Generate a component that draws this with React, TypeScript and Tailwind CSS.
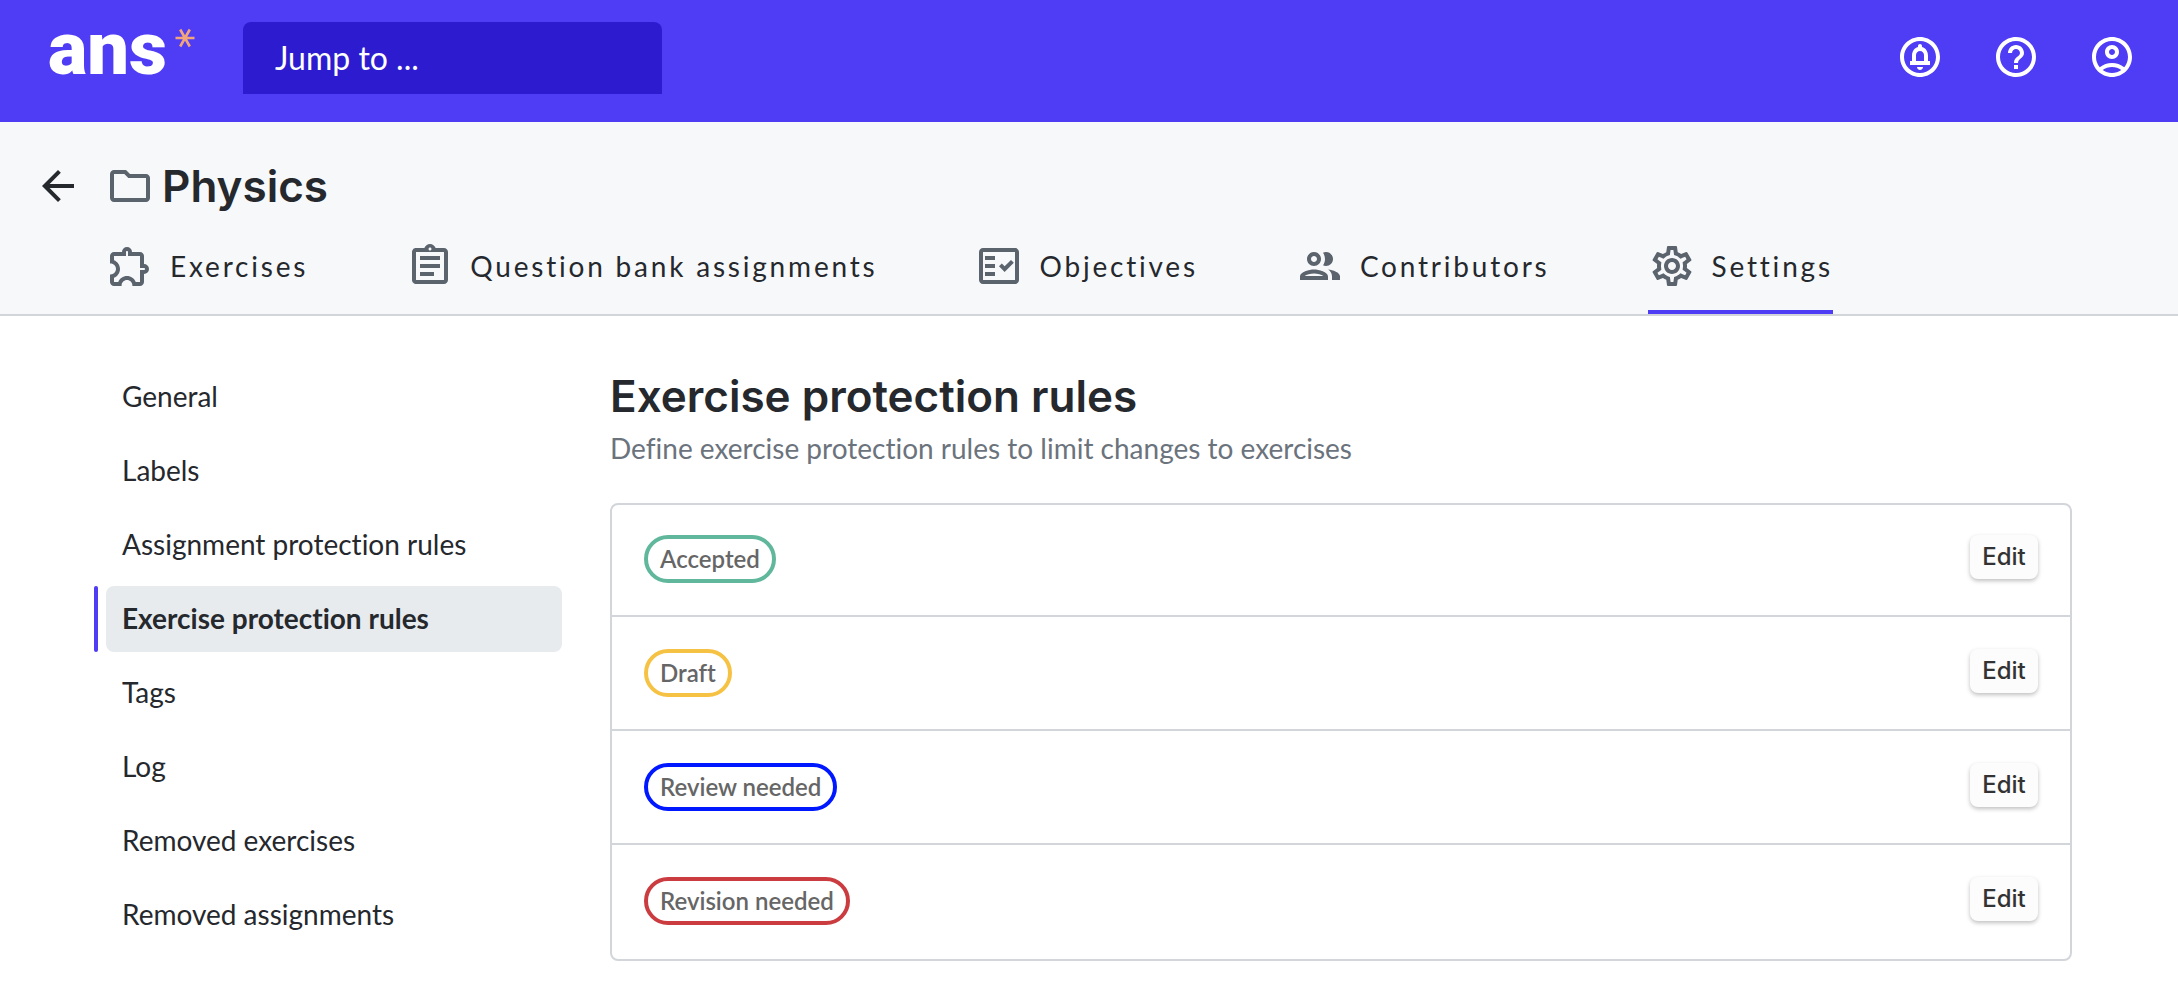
import type { ComponentType } from "react";
import {
  MdArrowBack,
  MdHelpOutline,
  MdOutlineAccountCircle,
  MdOutlineAssignment,
  MdOutlineCircleNotifications,
  MdOutlineExtension,
  MdOutlineFactCheck,
  MdOutlineSettings,
} from "react-icons/md";

type Icon = ComponentType<{ className?: string }>;

function FolderIcon({ className }: { className?: string }) {
  return (
    <svg viewBox="0 0 24 24" fill="currentColor" className={className} aria-hidden="true">
      <path d="M20 6h-8l-2-2H4c-1.1 0-2 .9-2 2v12c0 1.1.9 2 2 2h16c1.1 0 2-.9 2-2V8c0-1.1-.9-2-2-2zm0 12H4V6h5.17l2 2H20v10z" />
    </svg>
  );
}

function PeopleIcon({ className }: { className?: string }) {
  return (
    <svg viewBox="0 0 24 24" fill="currentColor" className={className} aria-hidden="true">
      <path d="M9 13.75c-2.34 0-7 1.17-7 3.5V19h14v-1.75c0-2.33-4.66-3.5-7-3.5zM4.34 17c.84-.58 2.87-1.25 4.66-1.25s3.82.67 4.66 1.25H4.34zM9 12c1.93 0 3.5-1.57 3.5-3.5S10.93 5 9 5 5.5 6.57 5.5 8.5 7.07 12 9 12zm0-5c.83 0 1.5.67 1.5 1.5S9.83 10 9 10s-1.5-.67-1.5-1.5S8.17 7 9 7zm7.04 6.81c1.16.84 1.96 1.96 1.96 3.44V19h4v-1.75c0-2.02-3.5-3.17-5.96-3.44zM15 12c1.93 0 3.5-1.57 3.5-3.5S16.93 5 15 5c-.54 0-1.04.13-1.5.35.63.89 1 1.98 1 3.15s-.37 2.26-1 3.15c.46.22.96.35 1.5.35z" />
    </svg>
  );
}

const tabs: { label: string; icon: Icon; active?: boolean }[] = [
  { label: "Exercises", icon: MdOutlineExtension },
  { label: "Question bank assignments", icon: MdOutlineAssignment },
  { label: "Objectives", icon: MdOutlineFactCheck },
  { label: "Contributors", icon: PeopleIcon },
  { label: "Settings", icon: MdOutlineSettings, active: true },
];

const sections = [
  "General",
  "Labels",
  "Assignment protection rules",
  "Exercise protection rules",
  "Tags",
  "Log",
  "Removed exercises",
  "Removed assignments",
];
const activeSection = "Exercise protection rules";

const rules = [
  { label: "Accepted", border: "border-[#61b79b]" },
  { label: "Draft", border: "border-[#f6c244]" },
  { label: "Review needed", border: "border-[#0018ff]" },
  { label: "Revision needed", border: "border-[#cb3c40]" },
];

const actions: { label: string; icon: Icon }[] = [
  { label: "Notifications", icon: MdOutlineCircleNotifications },
  { label: "Help", icon: MdHelpOutline },
  { label: "Account", icon: MdOutlineAccountCircle },
];

function Logo() {
  return (
    <a href="#home" aria-label="ans home" className="flex items-start gap-2 text-white">
      <span className="font-[Roboto,sans-serif] text-[74px] leading-[54px] font-black">ans</span>
      <svg viewBox="0 0 20 20" className="mt-1.5 size-5" fill="none" stroke="#f2a57b" strokeWidth="2.6" aria-hidden="true">
        <path d="M0.5 10H19.5M5.2 1.5L14.8 18.5M14.8 1.5L5.2 18.5" />
      </svg>
    </a>
  );
}

function TopBar() {
  return (
    <header className="flex items-start justify-between bg-[#4f3cf5] pt-[22px] pr-[42px] pb-7 pl-12">
      <div className="flex items-start gap-12">
        <Logo />
        <input
          type="text"
          aria-label="Jump to"
          placeholder="Jump to ..."
          className="h-[72px] w-[419px] rounded-t-lg bg-[#2d1ccf] px-8 pb-0.5 text-[32px] text-white outline-none placeholder:text-white"
        />
      </div>
      <div className="flex gap-12 pt-[11px]">
        {actions.map(({ label, icon: ActionIcon }) => (
          <button key={label} type="button" aria-label={label} className="text-white">
            <ActionIcon className="size-12" />
          </button>
        ))}
      </div>
    </header>
  );
}

function PageHeader() {
  return (
    <div className="border-b-2 border-[#d2d5da] bg-[#f7f8fa]">
      <div className="flex items-center gap-6 px-[34px] pt-8">
        <a href="#back" aria-label="Back">
          <MdArrowBack className="size-12" />
        </a>
        <h1 className="flex items-center gap-2 font-[Inter,sans-serif] text-[44px] leading-[64px] font-semibold">
          <FolderIcon className="size-12 text-[#5b636d]" />
          Physics
        </h1>
      </div>
      <nav aria-label="Question bank" className="flex gap-[98px] px-[106px]">
        {tabs.map(({ label, icon: TabIcon, active }) => (
          <a
            key={label}
            href={"#" + label}
            aria-current={active ? "page" : undefined}
            className={
              active
                ? "flex items-center gap-4 border-b-4 border-[#4f3cf5] pt-6 pb-5 tracking-widest whitespace-nowrap"
                : "flex items-center gap-4 border-b-4 border-transparent pt-6 pb-5 tracking-widest whitespace-nowrap"
            }
          >
            <TabIcon className="size-12 text-[#5b636d]" />
            {label}
          </a>
        ))}
      </nav>
    </div>
  );
}

function Sidebar() {
  return (
    <nav aria-label="Settings" className="w-[456px] shrink-0">
      <ul className="flex flex-col gap-2">
        {sections.map((name) =>
          name === activeSection ? (
            <li key={name} className="-ml-3 flex gap-2">
              <span className="w-1 rounded-xs bg-[#4f3cf5]" />
              <a
                href={"#" + name}
                aria-current="page"
                className="flex h-[66px] flex-1 items-center rounded-lg bg-[#e8ebee] px-4 pb-0.5 font-bold"
              >
                {name}
              </a>
            </li>
          ) : (
            <li key={name}>
              <a href={"#" + name} className="flex h-[66px] items-center px-4 pb-0.5">
                {name}
              </a>
            </li>
          ),
        )}
      </ul>
    </nav>
  );
}

function RuleList() {
  return (
    <ul className="mt-8 divide-y-2 divide-[#d2d5da] rounded-lg border-2 border-[#d2d5da]">
      {rules.map(({ label, border }) => (
        <li key={label} className="flex items-start justify-between px-8 py-8 first:pt-[30px] last:pb-[34px]">
          <span
            className={`${border} flex h-12 items-center rounded-full border-4 px-3 text-[24px] font-semibold text-[#666666]`}
          >
            {label}
          </span>
          <button
            type="button"
            aria-label={"Edit " + label}
            className="h-11 w-[68px] rounded-lg bg-[#fcfcfc] font-[Inter,sans-serif] text-[24px] font-medium text-[#333333] shadow-[0_2px_4px_rgba(0,0,0,0.25)]"
          >
            Edit
          </button>
        </li>
      ))}
    </ul>
  );
}

export default function App() {
  return (
    <div className="min-h-screen bg-white font-[Lato,sans-serif] text-[28px] leading-10 text-[#25282d] [font-variant-ligatures:none]">
      <TopBar />
      <PageHeader />
      <div className="flex gap-12 px-[106px] pt-12">
        <Sidebar />
        <main className="min-w-0 flex-1 pb-10">
          <h2 className="pt-1 font-[Inter,sans-serif] text-[44px] leading-[56px] font-semibold">
            Exercise protection rules
          </h2>
          <p className="mt-1 pb-[3px] text-[#6b737d]">
            Define exercise protection rules to limit changes to exercises
          </p>
          <RuleList />
        </main>
      </div>
    </div>
  );
}
